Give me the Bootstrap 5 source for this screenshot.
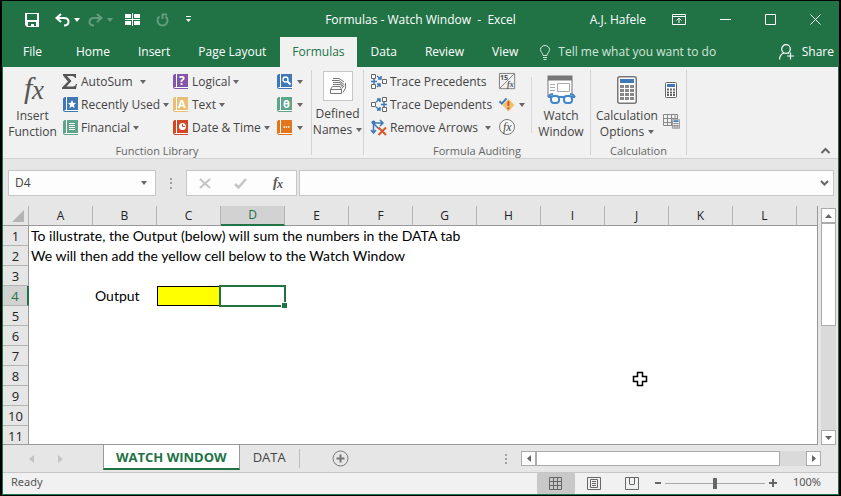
<!DOCTYPE html>
<html lang="en">
<head>
<meta charset="utf-8">
<meta name="viewport" content="width=device-width, initial-scale=1">
<title>Formulas - Watch Window - Excel</title>
<link href="https://cdn.jsdelivr.net/npm/bootstrap@5.3.0/dist/css/bootstrap.min.css" rel="stylesheet">
<style>
:root { --xl: #217346; --ink: #444; --pane: #e6e6e6; --face: #f1f1f1; --line: #ababab; }
body { font: 12px/16px "Open Sans", "Noto Sans", sans-serif; color: var(--ink); background: #000; padding: 1px 2px 1px 2px; }
button, input { font: inherit; color: inherit; background: none; border: 0; padding: 0; }
svg { display: block; flex: none; overflow: visible; }
.app { background: var(--pane); border: 1px solid var(--xl); }
.head { background: var(--xl); color: #fff; }
.titlebar { height: 35px; }
.side { flex: 1 1 0; }
.quick > :first-child { margin-left: 22px; }
.win { margin-left: 34px; }
.user { margin-right: 26px; }
.edge { margin-right: 17px; }
.dim { opacity: .3; }
.tabs { height: 30px; }
.tab { padding: 0 14px; color: #fff; text-decoration: none; line-height: 29px; }
.tab.first { padding: 0 20px; }
.tab.on { background: var(--face); color: var(--xl); padding: 0 12px; }
.tell { color: #d3e5da; }
.tell::placeholder { color: #d3e5da; opacity: 1; }
.share { padding-right: 4px; }
.caret { border: 3px solid transparent; border-top: 4px solid #666; border-bottom: 0; width: 0; height: 0; flex: none; }
.head .caret { border-top-color: #fff; }
.ribbon { background: var(--face); height: 93px; border-bottom: 1px solid #d2d2d2; padding-top: 3px; }
.grp { border-right: 1px solid #d2d2d2; height: 85px; }
.grp-name { color: #666; text-align: center; font-size: 11px; line-height: 16px; }
.stack { display: grid; grid-auto-rows: 23px; align-content: start; justify-items: start; }
.cmd { display: flex; align-items: center; gap: 3px; white-space: nowrap; }
.big { display: flex; flex-direction: column; align-items: center; padding-top: 4px; white-space: nowrap; }
.big .pic { height: 32px; display: flex; align-items: center; margin-bottom: 2px; }
.g1 { width: 309px; } .g1 .cols { grid-template-columns: 59px 111px 104px 1fr; }
.g2 { width: 52px; }
.g3 { width: 227px; } .g3 .cols { grid-template-columns: 124px 36px 1fr; padding-left: 7px; }
.g4 { width: 96px; } .g4 .cols { grid-template-columns: 64px 1fr; }
.cols { display: grid; height: 73px; }
.split { border-left: 1px solid #d9d9d9; height: 56px; margin-top: 7px; }
.boxed { background: #fdfdfd; border: 1px solid #c6c6c6; width: 30px; height: 30px; margin: 1px 0 5px; display: flex; align-items: center; justify-content: center; }
.fbar { padding: 11px 4px 10px 5px; }
.fld { height: 26px; background: #fdfdfd; border: 1px solid #c6c6c6; display: flex; align-items: center; }
.namebox { width: 148px; padding-left: 6px; }
.fxbox { width: 111px; padding: 0 9px 0 12px; margin-right: 2px; }
.dots { width: 30px; color: #a0a0a0; }
.grid-wrap { border-right: 1px solid #999; border-bottom: 1px solid #999; margin-right: 3px; background: #fff; min-height: 0; overflow: hidden; }
.main { min-height: 0; }
.sheet { table-layout: fixed; width: 100%; border-collapse: separate; border-spacing: 0; font: 14px/18px Lato, "Open Sans", sans-serif; color: #000; }
.sheet th, .sheet td { height: 20px; padding: 0; font-weight: 400; white-space: nowrap; }
.sheet th { background: var(--pane); text-align: center; color: #222; font-family: "Open Sans", "Noto Sans", sans-serif; font-size: 12px; }
.sheet thead th { border-right: 1px solid #b4b4b4; border-bottom: 1px solid #999; }
.sheet thead th:last-child { border-right: 0; }
.sheet tbody th { border-right: 1px solid #999; border-bottom: 1px solid #b4b4b4; font-size: 13px; }
.sheet th.sel { background: #d2d2d2; color: var(--xl); }
.sheet thead th.sel { border-bottom: 2px solid var(--xl); }
.sheet tbody th.sel { border-right: 2px solid var(--xl); }
.sheet td { padding-left: 2px; overflow: visible; }
.sheet td.yellow { background: #ff0; border: 1px solid #000; border-right: 0; }
.sheet td.active { position: relative; }
.active::before { content: ""; position: absolute; inset: -1px -1px -1px -2px; border: 2px solid var(--xl); }
.active::after { content: ""; position: absolute; right: -2px; bottom: -2px; width: 5px; height: 5px; background: var(--xl); outline: 1px solid #fff; }
.w-head { width: 26px; } .w-col { width: 64px; }
.pointer-x { position: absolute; left: 629px; top: 369px; }
.vbar { width: 15px; margin: 2px 2px 0 0; background: #dadada; }
.sb { background: #fff; border: 1px solid var(--line); display: flex; align-items: center; justify-content: center; width: 15px; height: 15px; flex: none; }
.thumb { background: #fff; border: 1px solid var(--line); }
.vbar .thumb { height: 103px; }
.sheets { height: 27px; font-size: 13px; }
.nav-arrows { width: 100px; gap: 24px; padding-left: 26px; color: #c4c4c4; }
.sh { line-height: 24px; height: 25px; text-decoration: none; color: var(--ink); padding: 0 13px; align-self: flex-start; }
.sh.on { background: #fff; color: var(--xl); font-weight: 700; border: 1px solid #999; border-top: 0; border-bottom: 2px solid var(--xl); padding: 0 12px; }
.hbar { width: 300px; background: #dadada; height: 15px; }
.hbar .thumb { width: 244px; margin-right: auto; }
.status { height: 22px; background: var(--face); border-top: 1px solid #c6c6c6; padding-left: 8px; color: #555; font: 11px/16px "Noto Sans", "Open Sans", sans-serif; }
.status > span { padding-bottom: 2px; }
.view { width: 38px; height: 21px; display: flex; align-items: center; justify-content: center; }
.view.on { background: #c8c8c8; }
.zoom { width: 100px; height: 12px; appearance: none; background: linear-gradient(#aaa, #aaa) center / 100% 1px no-repeat; }
.zoom::-webkit-slider-thumb { appearance: none; width: 4px; height: 11px; background: #666; border-radius: 0; }
</style>
</head>
<body class="vh-100">
<svg width="0" height="0" class="position-absolute" aria-hidden="true">
  <defs>
    <symbol id="book" viewBox="0 0 15 15"><path d="M3 0H15V15H2C1 15 0 14 0 13V2C0 1 1 0 2 0Z" fill="currentColor"/><path d="M3.500 0V13M1.500 13.500H15" stroke="#fff" fill="none"/></symbol>
    <symbol id="node" viewBox="0 0 5 5"><path d="M.5 .5H4.500V4.500H.5Z" fill="#fff" stroke="#666"/></symbol>
    <symbol id="calc" viewBox="0 0 20 28"><rect x=".75" y=".75" width="18.5" height="26.5" rx="2" fill="#fff" stroke="#777" stroke-width="1.5"/><path d="M3 3H17V7H3Z" fill="#3f78b5"/><path d="M3 10.500H7M8 10.500H12M13 10.500H17M3 14.500H7M8 14.500H12M13 14.500H17M3 18.500H7M8 18.500H12M13 18.500H17M3 22.500H7M8 22.500H12M13 22.500H17" stroke="#888" stroke-width="3"/></symbol>
    <symbol id="calc-s" viewBox="0 0 12 16"><rect x=".5" y=".5" width="11" height="15" rx="1" fill="#fff" stroke="#666"/><path d="M2 2H10V5H2Z" fill="#3f78b5"/><path d="M2 7.500H10M2 10.500H10M2 13H10" stroke="#666" stroke-width="2" stroke-dasharray="2 1"/></symbol>
  </defs>
</svg>
<div class="app d-flex flex-column h-100 position-relative">
  <header class="head">
    <div class="titlebar d-flex align-items-center">
      <div class="side quick d-flex align-items-center">
        <button aria-label="Save"><svg width="14" height="14" viewBox="0 0 14 14"><path d="M0 0H14V14H2L0 12Z" fill="#fff"/><path d="M2 1H12V7H2ZM3 9H11V13H9V11H6V13H3Z" fill="#217346"/></svg></button>
        <button class="d-flex align-items-center gap-1 ms-3" aria-label="Undo"><svg width="15" height="14" viewBox="0 0 15 14" fill="none" stroke="#fff" stroke-width="2"><path d="M6 1L1.500 5L6 9M2 5H9C15 5 15 12.500 9 12.500"/></svg><span class="caret"></span></button>
        <button class="d-flex align-items-center gap-1 ms-2 dim" aria-label="Redo"><svg width="15" height="14" viewBox="0 0 15 14" fill="none" stroke="#fff" stroke-width="2"><path d="M9 1L13.500 5L9 9M13 5H6C0 5 0 12.500 6 12.500"/></svg><span class="caret"></span></button>
        <button class="ms-2 ps-1" aria-label="Freeze panes"><svg width="15" height="13" viewBox="0 0 15 13" fill="#fff"><path d="M0 1H6V5H0ZM9 1H15V5H9ZM0 8H6V12H0ZM9 8H15V12H9ZM7 0H8V13H7ZM0 6H15V7H0Z"/></svg></button>
        <button class="ms-3 dim" aria-label="Repeat"><svg width="13" height="14" viewBox="0 0 13 14" fill="none" stroke="#fff" stroke-width="2"><path d="M3.500 3.500A5 5 0 1 0 9.500 3.500M6.500 6V1.500H11"/></svg></button>
        <button class="ms-3" aria-label="Customize toolbar"><svg width="7" height="8" viewBox="0 0 7 8" fill="#fff"><path d="M1 0H6V1H1ZM1 3H6L3.500 6Z"/></svg></button>
      </div>
      <div>Formulas - Watch Window &nbsp;-&nbsp; Excel</div>
      <div class="side d-flex align-items-center justify-content-end">
        <span class="user">A.J. Hafele</span>
        <button aria-label="Ribbon display options"><svg width="14" height="11" viewBox="0 0 14 11" fill="none" stroke="#fff"><path d="M.5 .5H13.500V10.500H.5ZM.5 2.500H13.500M7 9V4.500M4.500 6.500L7 4L9.500 6.500"/></svg></button>
        <button class="win" aria-label="Minimize"><svg width="11" height="11" viewBox="0 0 11 11"><path d="M0 5.500H11" stroke="#fff"/></svg></button>
        <button class="win" aria-label="Maximize"><svg width="11" height="11" viewBox="0 0 11 11"><path d="M.5 .5H10.500V10.500H.5Z" fill="none" stroke="#fff"/></svg></button>
        <button class="win edge" aria-label="Close"><svg width="11" height="11" viewBox="0 0 11 11"><path d="M.5 .5L10.500 10.500M10.500 .5L.5 10.500" stroke="#fff"/></svg></button>
      </div>
    </div>
    <nav class="tabs d-flex">
      <a class="tab first" href="#">File</a><a class="tab" href="#">Home</a><a class="tab" href="#">Insert</a><a class="tab" href="#">Page Layout</a><a class="tab on" href="#" aria-current="page">Formulas</a><a class="tab" href="#">Data</a><a class="tab" href="#">Review</a><a class="tab" href="#">View</a>
      <label class="d-flex align-items-center gap-2 flex-grow-1 ps-2"><svg width="10" height="15" viewBox="0 0 10 15" fill="none" stroke="#d3e5da"><path d="M3 10.500C3 8 .5 7.500 .5 4.500A4.500 4 0 0 1 9.500 4.500C9.500 7.500 7 8 7 10.500ZM3 12.500H7M3.500 14.500H6.500"/></svg><input class="tell flex-grow-1" type="text" placeholder="Tell me what you want to do" aria-label="Tell me what you want to do"></label>
      <button class="share d-flex align-items-center gap-2"><svg width="15" height="16" viewBox="0 0 15 16" fill="none" stroke="#fff" stroke-width="1.2"><circle cx="7" cy="5" r="4.300"/><path d="M.6 15.500C.6 12 2 10 5 9M9 9L10 9.500M11.500 8.500V15.500M8 12H15"/></svg>Share</button>
    </nav>
  </header>

  <section class="ribbon d-flex" aria-label="Formulas ribbon">
    <div class="grp g1">
      <div class="cols">
        <button class="big"><span class="pic"><svg width="28" height="30" viewBox="0 0 28 30" font-family="Liberation Serif" font-style="italic" fill="#555"><text x="5" y="23" font-size="30">f</text><text x="13" y="24" font-size="27">x</text></svg></span>Insert<br>Function</button>
        <div class="stack">
          <button class="cmd"><svg width="16" height="15" viewBox="0 0 16 15"><path d="M1 0H14V4H13Q12.500 2 10 2H5L9.500 7L4.500 12.500H11Q13.500 12.500 14 10H15L14 15H0V13.500L6 7.500L1 1.500Z" fill="#555"/></svg>AutoSum<span class="caret ms-1"></span></button>
          <button class="cmd"><svg width="16" height="16" viewBox="0 0 16 16" color="#3f78b5"><use href="#book" x="1" width="15" height="15"/><path d="M10 3L11.200 5.700L14 6L12 8L12.500 11L10 9.500L7.500 11L8 8L6 6L8.800 5.700Z" fill="#fff"/></svg>Recently Used<span class="caret"></span></button>
          <button class="cmd"><svg width="16" height="16" viewBox="0 0 16 16" color="#5fa58a"><use href="#book" x="1" width="15" height="15"/><path d="M7 3.500H13M7 5.500H13M7 7.500H13M7 9.500H13" stroke="#fff"/></svg>Financial<span class="caret"></span></button>
        </div>
        <div class="stack">
          <button class="cmd"><svg width="16" height="16" viewBox="0 0 16 16" color="#8556a8"><use href="#book" width="15" height="15"/><text x="6" y="11" font-size="12" font-weight="700" fill="#fff">?</text></svg>Logical<span class="caret"></span></button>
          <button class="cmd"><svg width="16" height="16" viewBox="0 0 16 16" color="#e8bf77"><use href="#book" width="15" height="15"/><text x="5" y="11" font-size="11" font-weight="700" fill="#fff">A</text></svg>Text<span class="caret"></span></button>
          <button class="cmd"><svg width="16" height="16" viewBox="0 0 16 16" color="#d24726"><use href="#book" width="15" height="15"/><circle cx="9.500" cy="6.500" r="3.500" fill="#fff"/><path d="M9.500 4V6.500H12" stroke="#d24726" fill="none"/></svg>Date &amp; Time<span class="caret"></span></button>
        </div>
        <div class="stack">
          <button class="cmd gap-1" aria-label="Lookup and reference"><svg width="16" height="16" viewBox="0 0 16 16" color="#3f78b5"><use href="#book" width="15" height="15"/><circle cx="8.500" cy="5.500" r="2.500" fill="none" stroke="#fff" stroke-width="1.300"/><path d="M10.500 7.500L13.500 10.500" stroke="#fff" stroke-width="2"/></svg><span class="caret"></span></button>
          <button class="cmd gap-1" aria-label="Math and trig"><svg width="16" height="16" viewBox="0 0 16 16" color="#5fa58a"><use href="#book" width="15" height="15"/><text x="6" y="11" font-size="11" font-weight="700" fill="#fff">θ</text></svg><span class="caret"></span></button>
          <button class="cmd gap-1" aria-label="More functions"><svg width="16" height="16" viewBox="0 0 16 16" color="#e3751c"><use href="#book" width="15" height="15"/><path d="M6.500 7H8M8.700 7H10.200M11 7H12.500" stroke="#fff" stroke-width="1.300"/></svg><span class="caret"></span></button>
        </div>
      </div>
      <div class="grp-name">Function Library</div>
    </div>
    <div class="grp g2 d-flex justify-content-center">
      <button class="big pt-0"><span class="boxed"><svg width="18" height="17" viewBox="0 0 18 17" fill="none" stroke="#777"><path d="M1.500 11.500H12.500V15.500H1.500ZM14 14.500L16.500 10V5M12.500 11.500L11 8.500H3.500L1.500 11.500M4 6.500H11.500L14 10M4 4.500H11L15 9M3 2.500H10L15.500 7M4 .5H10L15 4"/></svg></span><span>Defined</span><span class="d-flex align-items-center gap-1">Names<span class="caret"></span></span></button>
    </div>
    <div class="grp g3">
      <div class="cols">
        <div class="stack">
          <button class="cmd"><svg width="16" height="16" viewBox="0 0 16 16"><use href="#node" width="5" height="5"/><use href="#node" y="10" width="5" height="5"/><use href="#node" x="11" y="5" width="5" height="5"/><path d="M0 7.500H6M3 5V10M6 2L10 5M10 2V5H7M6 13L9 10M9 13V10H6" fill="none" stroke="#3f78b5" stroke-width="1.500"/></svg>Trace Precedents</button>
          <button class="cmd"><svg width="16" height="16" viewBox="0 0 16 16"><use href="#node" y="5" width="5" height="5"/><use href="#node" x="11" width="5" height="5"/><use href="#node" x="11" y="10" width="5" height="5"/><path d="M10 7.500H16M13 5V10M5 5L9 2M6 2H9V5M5 10L9 13M6 13H9V10" fill="none" stroke="#3f78b5" stroke-width="1.500"/></svg>Trace Dependents</button>
          <button class="cmd"><svg width="16" height="16" viewBox="0 0 16 16" fill="none"><path d="M2.500 1V12M0 10L2.500 13L5 10M2 3H11M9 0L12 3L9 6M2 3L8 9" stroke="#3f78b5" stroke-width="1.500"/><circle cx="2.500" cy="2.500" r="2" fill="#3f78b5"/><path d="M7.500 7.500L15 15M15 7.500L7.500 15" stroke="#d8572a" stroke-width="2"/></svg>Remove Arrows<span class="caret ms-1"></span></button>
        </div>
        <div class="stack">
          <button class="cmd" aria-label="Show formulas"><svg class="ms-1" width="17" height="17" viewBox="0 0 19 19"><path d="M.5 .5H17.500V17.500H.5ZM1 17L17 1" fill="none" stroke="#777"/><text x="1" y="8" font-size="8" font-weight="700" fill="#555">15</text><text x="9" y="16" font-family="Liberation Serif" font-size="9" font-weight="700" font-style="italic" fill="#555">fx</text></svg></button>
          <button class="cmd gap-1" aria-label="Error checking"><svg class="ms-1" width="16" height="16" viewBox="0 0 17 16"><path d="M10 2L16 8L10 14.500L4 8Z" fill="#efc16f" stroke="#efc16f" stroke-linejoin="round"/><path d="M10 4V9M10 10.500V12.500" stroke="#d8472a" stroke-width="2"/><path d="M.5 4L3 6.500L8 1" fill="none" stroke="#3f78b5" stroke-width="2"/></svg><span class="caret"></span></button>
          <button class="cmd" aria-label="Evaluate formula"><svg class="ms-1" width="17" height="17" viewBox="0 0 17 17"><circle cx="8" cy="8" r="7.500" fill="#fafafa" stroke="#777"/><text x="4" y="12" font-family="Liberation Serif" font-size="12" font-style="italic" fill="#444">fx</text></svg></button>
        </div>
        <div class="d-flex">
          <div class="split"></div>
          <button class="big flex-grow-1"><span class="pic"><svg width="28" height="30" viewBox="0 0 28 30" fill="none"><path d="M1 1H25V20H1Z" fill="#fff"/><path d="M.5 .5H25.500V5.500H.5Z" fill="#777"/><path d="M1 5V21M25 5V19" stroke="#777"/><path d="M3 9.500H8M3 12.500H8M3 15.500H8M10.500 8.500H22.500V16.500H10.500Z" stroke="#aaa"/><path d="M1 22Q3 19 6 19M28 22Q26 19 23 19M1 22H28" stroke="#3f86cb" stroke-width="2"/><rect x="4" y="21" width="8" height="7" rx="3" fill="#fff" stroke="#3f86cb" stroke-width="2"/><rect x="17" y="21" width="8" height="7" rx="3" fill="#fff" stroke="#3f86cb" stroke-width="2"/></svg></span>Watch<br>Window</button>
        </div>
      </div>
      <div class="grp-name">Formula Auditing</div>
    </div>
    <div class="grp g4">
      <div class="cols ps-1">
        <button class="big"><span class="pic"><svg width="20" height="28"><use href="#calc"/></svg></span><span>Calculation</span><span class="d-flex align-items-center gap-1">Options<span class="caret"></span></span></button>
        <div class="d-flex flex-column gap-3 ps-1 pt-2 mt-1">
          <button aria-label="Calculate now"><svg width="16" height="16"><use href="#calc-s" x="2" width="12" height="16"/></svg></button>
          <button aria-label="Calculate sheet"><svg width="17" height="16" viewBox="0 0 17 16" fill="none"><path d="M.5 .5H14.500V11.500H.5ZM.5 4.500H14M.5 8.500H14M4.500 1V11M8.500 1V11M12 1V5" stroke="#888"/><use href="#calc-s" x="9" y="5" width="8" height="10"/></svg></button>
        </div>
      </div>
      <div class="grp-name">Calculation</div>
    </div>
    <button class="ms-auto align-self-end me-2 pb-1" aria-label="Collapse the ribbon"><svg width="9" height="6" viewBox="0 0 9 6"><path d="M.5 5L4.500 1L8.500 5" fill="none" stroke="#666" stroke-width="2"/></svg></button>
  </section>

  <section class="fbar d-flex" aria-label="Formula bar">
    <div class="fld namebox pe-1"><input class="flex-grow-1 w-75" type="text" value="D4" aria-label="Name box"><button class="p-1" aria-label="Names list"><span class="caret d-block"></span></button></div>
    <div class="dots d-flex align-items-center justify-content-center"><svg width="2" height="11" viewBox="0 0 2 11" fill="currentColor"><path d="M0 0H2V2H0ZM0 4H2V6H0ZM0 9H2V11H0Z"/></svg></div>
    <div class="fld fxbox justify-content-between">
      <button aria-label="Cancel"><svg width="12" height="11" viewBox="0 0 12 11"><path d="M1 1L11 10M11 1L1 10" stroke="#c4c4c4" stroke-width="2"/></svg></button>
      <button aria-label="Enter"><svg width="13" height="11" viewBox="0 0 13 11"><path d="M1 6L4.500 9.500L12 1" fill="none" stroke="#c4c4c4" stroke-width="2.500"/></svg></button>
      <button aria-label="Insert function"><svg width="17" height="16" viewBox="0 0 17 16" font-family="Liberation Serif" font-style="italic" font-weight="700" fill="#555"><text x="3" y="12" font-size="14">f</text><text x="7" y="13" font-size="12">x</text></svg></button>
    </div>
    <div class="fld flex-grow-1 pe-1"><input class="flex-grow-1" type="text" aria-label="Formula"><button aria-label="Expand formula bar"><svg width="9" height="7" viewBox="0 0 9 7"><path d="M1 1L4.500 4.500L8 1" fill="none" stroke="#666" stroke-width="2"/></svg></button></div>
  </section>

  <main class="main d-flex flex-grow-1">
    <div class="grid-wrap flex-grow-1">
      <table class="sheet">
        <colgroup><col class="w-head"><col class="w-col" span="12"><col></colgroup>
        <thead><tr><th><svg class="ms-auto me-1" width="12" height="12" viewBox="0 0 12 12"><path d="M12 0V12H0Z" fill="#b4b4b4"/></svg></th><th>A</th><th>B</th><th>C</th><th class="sel">D</th><th>E</th><th>F</th><th>G</th><th>H</th><th>I</th><th>J</th><th>K</th><th>L</th><th></th></tr></thead>
        <tbody>
          <tr><th>1</th><td colspan="13">To illustrate, the Output (below) will sum the numbers in the DATA tab</td></tr>
          <tr><th>2</th><td colspan="13">We will then add the yellow cell below to the Watch Window</td></tr>
          <tr><th>3</th><td colspan="13"></td></tr>
          <tr><th class="sel">4</th><td></td><td>Output</td><td class="yellow"></td><td class="active"></td><td colspan="9"></td></tr>
          <tr><th>5</th><td colspan="13"></td></tr>
          <tr><th>6</th><td colspan="13"></td></tr>
          <tr><th>7</th><td colspan="13"></td></tr>
          <tr><th>8</th><td colspan="13"></td></tr>
          <tr><th>9</th><td colspan="13"></td></tr>
          <tr><th>10</th><td colspan="13"></td></tr>
          <tr><th>11</th><td colspan="13"></td></tr>
        </tbody>
      </table>
    </div>
    <div class="vbar d-flex flex-column">
      <button class="sb" aria-label="Scroll up"><svg width="7" height="4" viewBox="0 0 7 4"><path d="M0 4L3.500 0L7 4Z" fill="#666"/></svg></button>
      <div class="thumb"></div>
      <button class="sb mt-auto" aria-label="Scroll down"><svg width="7" height="4" viewBox="0 0 7 4"><path d="M0 0L3.500 4L7 0Z" fill="#666"/></svg></button>
    </div>
  </main>

  <section class="sheets d-flex align-items-center" aria-label="Sheets">
    <div class="nav-arrows d-flex align-items-center">
      <button aria-label="Previous sheet"><svg width="5" height="8" viewBox="0 0 5 8"><path d="M5 0V8L0 4Z" fill="currentColor"/></svg></button>
      <button aria-label="Next sheet"><svg width="5" height="8" viewBox="0 0 5 8"><path d="M0 0V8L5 4Z" fill="currentColor"/></svg></button>
    </div>
    <a class="sh on" href="#">WATCH WINDOW</a><a class="sh" href="#">DATA</a>
    <div class="vr my-1"></div>
    <button class="ms-4 ps-2" aria-label="New sheet"><svg width="17" height="17" viewBox="0 0 17 17" fill="none" stroke="#777"><circle cx="8.500" cy="8.500" r="7.500"/><path d="M4.500 8.500H12.500M8.500 4.500V12.500" stroke-width="2"/></svg></button>
    <div class="dots d-flex justify-content-center ms-auto"><svg width="2" height="10" viewBox="0 0 2 10" fill="currentColor"><path d="M0 0H2V2H0ZM0 4H2V6H0ZM0 8H2V10H0Z"/></svg></div>
    <div class="hbar edge d-flex">
      <button class="sb" aria-label="Scroll left"><svg width="4" height="7" viewBox="0 0 4 7"><path d="M4 0V7L0 3.500Z" fill="#666"/></svg></button>
      <div class="thumb"></div>
      <button class="sb" aria-label="Scroll right"><svg width="4" height="7" viewBox="0 0 4 7"><path d="M0 0V7L4 3.500Z" fill="#666"/></svg></button>
    </div>
  </section>

  <footer class="status d-flex align-items-center">
    <span class="me-auto">Ready</span>
    <button class="view on" aria-label="Normal view"><svg width="13" height="13" viewBox="0 0 13 13"><path d="M.5 .5H12.500V12.500H.5ZM4.500 0V13M8.500 0V13M0 4.500H13M0 8.500H13" fill="none" stroke="#666"/></svg></button>
    <button class="view" aria-label="Page layout view"><svg width="14" height="13" viewBox="0 0 14 13"><path d="M.5 .5H13.500V12.500H.5ZM3.500 2.500H10.500V10.500H3.500ZM5 4.500H9M5 6.500H9M5 8.500H9" fill="none" stroke="#666"/></svg></button>
    <button class="view" aria-label="Page break view"><svg width="14" height="13" viewBox="0 0 14 13"><path d="M.5 .5H13.500V12.500H.5ZM4.500 0V7M9.500 0V7M4.500 7.500H9.500" fill="none" stroke="#666"/></svg></button>
    <button class="ms-1" aria-label="Zoom out"><svg width="6" height="2"><path d="M0 0H6V2H0Z" fill="#666"/></svg></button>
    <input class="zoom mx-1" type="range" min="0" max="100" value="50" aria-label="Zoom">
    <button aria-label="Zoom in"><svg width="8" height="8"><path d="M3 0H5V3H8V5H5V8H3V5H0V3H3Z" fill="#666"/></svg></button>
    <span class="ms-3 edge">100%</span>
  </footer>

  <svg class="pointer-x" width="16" height="16" viewBox="0 0 16 16"><path d="M5.500 1.500H10.500V5.500H14.500V10.500H10.500V14.500H5.500V10.500H1.500V5.500H5.500Z" fill="#fff" stroke="#000" stroke-width="1.500"/></svg>
</div>
<script src="https://cdn.jsdelivr.net/npm/bootstrap@5.3.0/dist/js/bootstrap.bundle.min.js"></script>
</body>
</html>
